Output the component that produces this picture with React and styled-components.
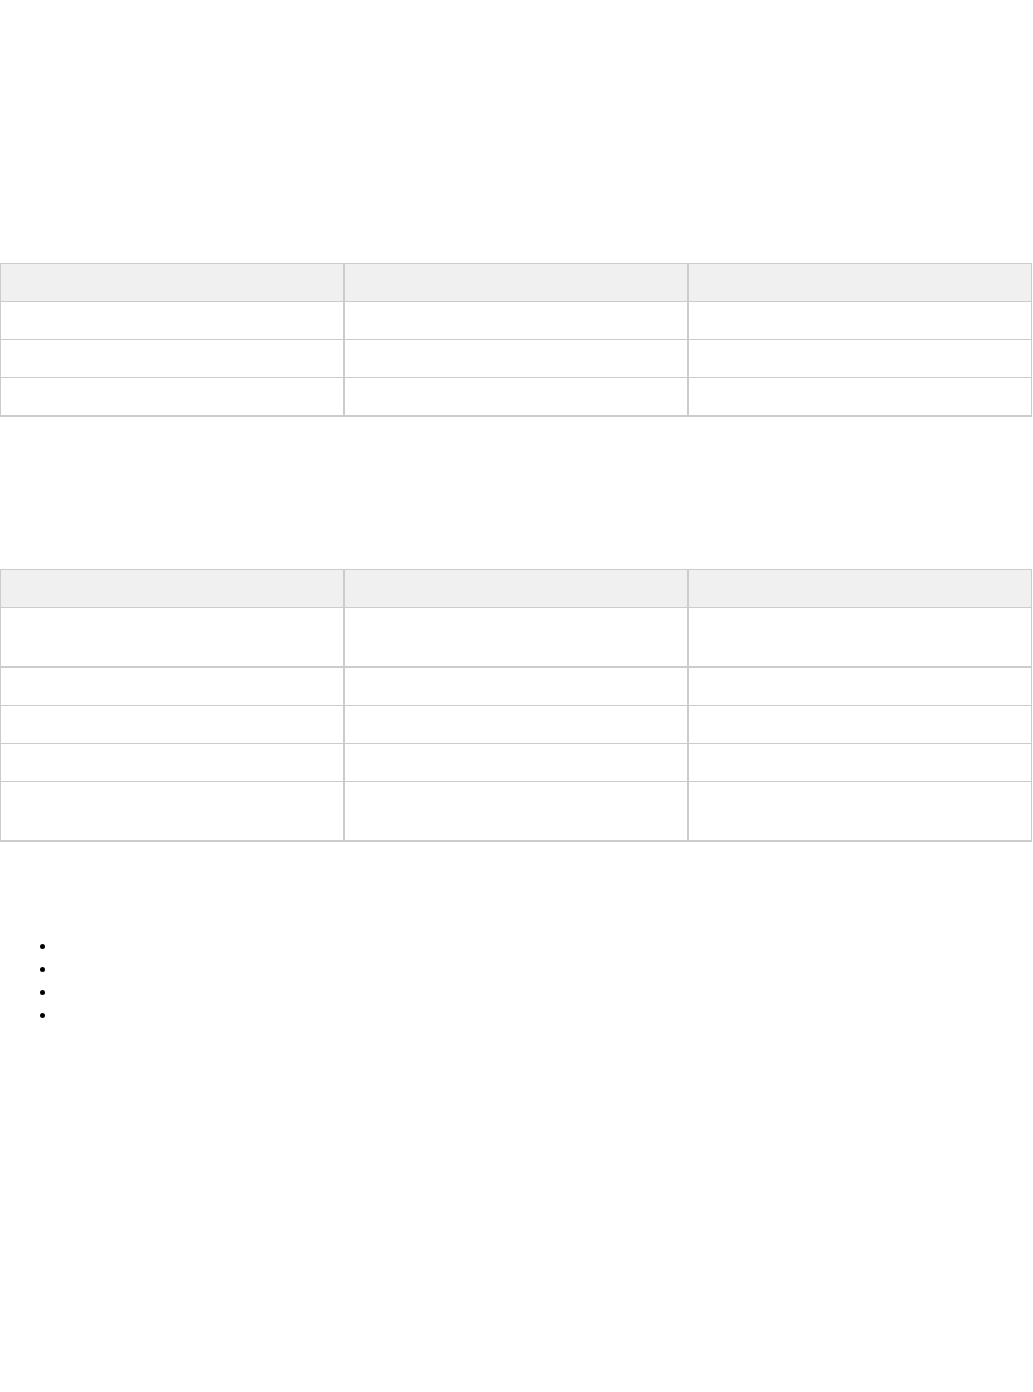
import React from 'react';
import styled, { createGlobalStyle } from 'styled-components';

const GlobalStyle = createGlobalStyle`
  html, body {
    margin: 0;
    padding: 0;
    background: #fff;
  }
  body {
    font-family: "Liberation Sans", Arial, sans-serif;
    font-size: 14px;
    color: #fff;
  }
`;

const Page = styled.div`
  width: 1033px;
  min-height: 1392px;
  display: flex;
  flex-direction: column;
`;

const Section = styled.section`
  margin-top: ${(p) => p.$top}px;
`;

const Table = styled.table`
  width: 1032px;
  border-collapse: separate;
  border-spacing: 0;
  table-layout: fixed;
`;

const HeadCell = styled.th`
  background: #f0f0f0;
  border: 1px solid #cccccc;
  height: 39px;
  padding: 0 8px;
  box-sizing: border-box;
  font-weight: bold;
  text-align: left;
  line-height: 21px;
`;

// rows are ~38px tall, two-line rows 60px; $thick closes a block with a 2px rule
const Cell = styled.td`
  border-left: 1px solid #cccccc;
  border-right: 1px solid #cccccc;
  border-bottom: ${(p) => (p.$thick ? 2 : 1)}px solid #cccccc;
  padding: 8px;
  line-height: 21px;
  height: ${(p) => p.$h}px;
  box-sizing: border-box;
  vertical-align: top;
`;

const List = styled.ul`
  margin: ${(p) => p.$top}px 0 0 0;
  padding-left: 56px;
  list-style: disc;
  line-height: 23px;
  font-size: 16px;
`;

const Item = styled.li`
  color: #000;
`;

const tableOne = [
  { h: 38, thick: false },
  { h: 38, thick: false },
  { h: 38, thick: true },
];

const tableTwo = [
  { h: 60, thick: true },
  { h: 37, thick: false },
  { h: 37, thick: false },
  { h: 37, thick: false },
  { h: 60, thick: true },
];

const DataTable = ({ rows }) => (
  <Table>
    <thead>
      <tr>
        <HeadCell>&nbsp;</HeadCell>
        <HeadCell>&nbsp;</HeadCell>
        <HeadCell>&nbsp;</HeadCell>
      </tr>
    </thead>
    <tbody>
      {rows.map((row, i) => (
        <tr key={i}>
          {[0, 1, 2].map((c) => (
            <Cell key={c} $h={row.h} $thick={row.thick}>&nbsp;</Cell>
          ))}
        </tr>
      ))}
    </tbody>
  </Table>
);

const App = () => (
  <Page>
    <GlobalStyle />
    <Section $top={263}>
      <DataTable rows={tableOne} />
    </Section>
    <Section $top={152}>
      <DataTable rows={tableTwo} />
    </Section>
    <List $top={92}>
      <Item>&nbsp;</Item>
      <Item>&nbsp;</Item>
      <Item>&nbsp;</Item>
      <Item>&nbsp;</Item>
    </List>
  </Page>
);

export default App;
